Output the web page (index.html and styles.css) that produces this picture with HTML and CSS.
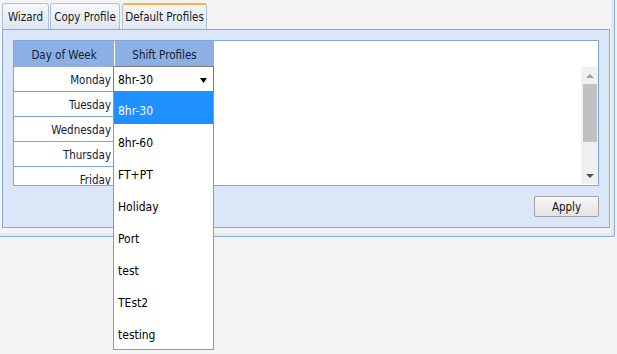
FILE: index.html
```html
<!DOCTYPE html>
<html>
<head>
<meta charset="utf-8">
<link rel="stylesheet" href="styles.css">
</head>
<body>
<div class="frame">
  <div class="tabs">
    <div class="tab t1">Wizard</div>
    <div class="tab t2">Copy Profile</div>
    <div class="tab t3 active">Default Profiles</div>
  </div>
  <div class="panel">
    <div class="box">
      <div class="col-day">
        <div class="th">Day of Week</div>
        <div class="td">Monday</div>
        <div class="td">Tuesday</div>
        <div class="td">Wednesday</div>
        <div class="td">Thursday</div>
        <div class="td">Friday</div>
      </div>
      <div class="col-shift">
        <div class="th th2">Shift Profiles</div>
      </div>
      <div class="fill">
        <div class="fill-head"></div>
        <div class="scrollbar">
          <div class="sb-btn"><span class="arrow-up"></span></div>
          <div class="sb-thumb"></div>
          <div class="sb-track"></div>
          <div class="sb-btn"><span class="arrow-down"></span></div>
        </div>
      </div>
    </div>
    <div class="actions"><button class="btn">Apply</button></div>
  </div>
</div>
<div class="combo">
  <div class="select">
    <span class="select-text">8hr-30</span>
    <svg class="caret" width="7" height="5" viewBox="0 0 7 5"><polygon points="0,0 7,0 3.5,5" fill="#000"/></svg>
  </div>
  <div class="list">
    <div class="item selected">8hr-30</div>
    <div class="item">8hr-60</div>
    <div class="item">FT+PT</div>
    <div class="item">Holiday</div>
    <div class="item">Port</div>
    <div class="item">test</div>
    <div class="item">TEst2</div>
    <div class="item">testing</div>
  </div>
</div>
</body>
</html>
```
FILE: styles.css
```css
html, body {
  margin: 0;
  padding: 0;
}
body {
  background: #f4f4f4;
  font-family: "DejaVu Sans Condensed", "DejaVu Sans", sans-serif;
  font-size: 11px;
  color: #000;
  width: 617px;
  height: 354px;
  position: relative;
  overflow: hidden;
}
.frame {
  width: 615px;
  height: 237px;
  box-sizing: border-box;
  border-right: 1px solid #8aaddf;
  border-bottom: 1px solid #8aaddf;
  border-bottom-right-radius: 3px;
  box-shadow: inset -3px -3px 0 #dfe8f7;
  padding-left: 2px;
}
.tabs {
  display: flex;
  padding-top: 3px;
  height: 29px;
  box-sizing: border-box;
}
.tab {
  height: 26px;
  box-sizing: border-box;
  border: 1px solid #a9c3e6;
  border-bottom: none;
  border-radius: 3px 3px 0 0;
  background: linear-gradient(#f6f8fc, #dfe6f1);
  color: #1b1b1b;
  display: flex;
  align-items: center;
  justify-content: center;
  padding-top: 1px;
  font-size: 11.5px;
}
.t1 { width: 47px; margin-right: 1px; }
.t2 { width: 70px; margin-right: 2px; }
.t3 { width: 85px; }
.tab.active {
  border-top: 2px solid #f5b53d;
  background: linear-gradient(#f3f6fb, #e3e9f3);
  padding-top: 0;
}
.panel {
  width: 608px;
  height: 199px;
  box-sizing: border-box;
  border: 1px solid #83a9de;
  background: #dbe6f8;
  padding: 10px;
}
.box {
  height: 146px;
  box-sizing: border-box;
  border: 1px solid #7ea6dc;
  background: #fff;
  display: flex;
  overflow: hidden;
}
.col-day {
  width: 100px;
  flex: none;
}
.th {
  height: 26px;
  background: #8db0e4;
  color: #10203a;
  display: flex;
  align-items: center;
  justify-content: center;
  padding-top: 2px;
  box-sizing: border-box;
  font-size: 11.5px;
}
.td {
  height: 25px;
  box-sizing: border-box;
  border-bottom: 1px solid #7ea6dc;
  text-align: right;
  padding-right: 3px;
  line-height: 26px;
  color: #10203a;
  font-size: 11.5px;
}
.col-shift {
  width: 100px;
  flex: none;
  border-left: 1px solid #fff;
  box-sizing: border-box;
}
.fill {
  flex: 1;
  display: flex;
  flex-direction: column;
  align-items: flex-end;
}
.fill-head {
  height: 26px;
  flex: none;
}
.scrollbar {
  width: 17px;
  flex: 1;
  margin-bottom: 1px;
  background: #f0f0f0;
  display: flex;
  flex-direction: column;
}
.sb-btn {
  height: 17px;
  flex: none;
  display: flex;
  align-items: center;
  justify-content: center;
}
.arrow-up {
  width: 0;
  height: 0;
  border-left: 4px solid transparent;
  border-right: 4px solid transparent;
  border-bottom: 4px solid #a3a3a3;
}
.arrow-down {
  width: 0;
  height: 0;
  border-left: 4px solid transparent;
  border-right: 4px solid transparent;
  border-top: 4px solid #505050;
}
.sb-thumb {
  height: 58px;
  flex: none;
  margin: 0 1px 0 2px;
  background: #c1c1c1;
}
.sb-track {
  flex: 1;
}
.actions {
  display: flex;
  justify-content: flex-end;
  margin-top: 10px;
}
.btn {
  width: 65px;
  height: 21px;
  box-sizing: border-box;
  border: 1px solid #a2a2a2;
  border-radius: 2px;
  background: linear-gradient(#f7f7f7, #e3e3e3);
  font-family: inherit;
  font-size: 11.5px;
  color: #111;
  padding: 1px 0 0;
}
.combo {
  position: absolute;
  left: 113px;
  top: 66px;
  width: 101px;
}
.select {
  height: 26px;
  box-sizing: border-box;
  border: 1px solid #7a7a7a;
  background: #fff;
  display: flex;
  align-items: center;
  justify-content: space-between;
  padding: 2px 6px 0 4px;
  font-size: 12px;
}
.caret {
  display: block;
}
.list {
  border: 1px solid #7f9db9;
  border-top: none;
  background: #fff;
  padding-bottom: 1px;
}
.item {
  height: 32px;
  box-sizing: border-box;
  line-height: 32px;
  padding: 3px 0 0 4px;
  font-size: 12px;
}
.item.selected {
  background: #1e90ff;
  color: #fff;
}
```
